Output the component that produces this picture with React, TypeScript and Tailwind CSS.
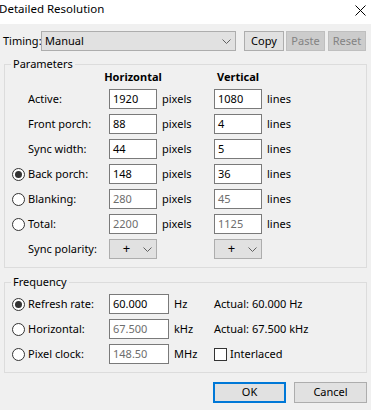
import React from 'react';

const FONT = { fontFamily: '"Segoe UI", "Noto Sans", sans-serif' };

const Chevron = () => (
  <svg width="9" height="5" viewBox="0 0 9 5" fill="none">
    <polyline points="0.5,0.5 4.5,4.5 8.5,0.5" stroke="#606060" strokeWidth="1" />
  </svg>
);

const Radio = ({ checked = false }: { checked?: boolean }) => (
  <span className="flex h-[13px] w-[13px] shrink-0 items-center justify-center rounded-full border border-[#333] bg-white">
    {checked && <span className="h-[7px] w-[7px] rounded-full bg-[#333]" />}
  </span>
);

const Field = ({ value, w = 'w-[48px]', disabled = false }: { value: string; w?: string; disabled?: boolean }) => (
  <div
    className={`flex h-[20px] shrink-0 items-center border border-[#7a7a7a] bg-white pl-[3px] ${w} ${
      disabled ? 'text-[#6d6d6d]' : 'text-black'
    }`}
  >
    {value}
  </div>
);

type Row = {
  label: string;
  radio?: boolean;
  checked?: boolean;
  h: string;
  v: string;
  disabled?: boolean;
};

const rows: Row[] = [
  { label: 'Active:', h: '1920', v: '1080' },
  { label: 'Front porch:', h: '88', v: '4' },
  { label: 'Sync width:', h: '44', v: '5' },
  { label: 'Back porch:', radio: true, checked: true, h: '148', v: '36' },
  { label: 'Blanking:', radio: true, h: '280', v: '45', disabled: true },
  { label: 'Total:', radio: true, h: '2200', v: '1125', disabled: true },
];

const Label = ({ text, radio, checked }: { text: string; radio?: boolean; checked?: boolean }) => (
  <div className="flex w-[97px] shrink-0 items-center">
    {radio ? (
      <>
        <Radio checked={checked} />
        <span className="ml-[3px]">{text}</span>
      </>
    ) : (
      <span className="pl-[16px]">{text}</span>
    )}
  </div>
);

const PolarityBox = () => (
  <div className="flex h-[20px] w-[48px] shrink-0 items-center border border-[#adadad] bg-[#e1e1e1]">
    <span className="w-[33px] text-center text-[13px]">+</span>
    <Chevron />
  </div>
);

export default function App() {
  return (
    <div className="h-[410px] w-[371px] overflow-hidden bg-[#f0f0f0] text-[11px] text-black" style={FONT}>
      {/* title bar */}
      <div className="flex h-[24px] items-start justify-between bg-white">
        <span className="ml-[-1px] text-[11.5px] leading-[18px]">Detailed Resolution</span>
        <svg className="mr-[5px] mt-[5px]" width="11" height="11" viewBox="0 0 11 11">
          <path d="M0.5 0.5 L10.5 10.5 M10.5 0.5 L0.5 10.5" stroke="#000" strokeWidth="1" />
        </svg>
      </div>

      {/* timing row */}
      <div className="mt-[7px] flex h-[20px] items-center">
        <span className="ml-[3px] w-[38px] shrink-0">Timing:</span>
        <div className="flex h-[20px] w-[195px] items-center justify-between border border-[#adadad] bg-[#e1e1e1] pl-[3px] pr-[4px]">
          <span>Manual</span>
          <Chevron />
        </div>
        <button className="ml-[8px] h-[20px] w-[40px] border border-[#adadad] bg-[#e1e1e1]">Copy</button>
        <button className="ml-[2px] h-[20px] w-[39px] border border-[#bfbfbf] bg-[#cccccc] text-[#838383]">
          Paste
        </button>
        <button className="ml-[3px] h-[20px] w-[38px] border border-[#bfbfbf] bg-[#cccccc] text-[#838383]">
          Reset
        </button>
      </div>

      {/* parameters */}
      <fieldset className="mx-[4px] mt-[7px] border border-[#dcdcdc] pb-[8px] pl-[7px]">
        <legend className="ml-[-1px] px-[2px] leading-[12px]">Parameters</legend>
        <div className="flex h-[14px] items-center font-bold">
          <div className="w-[97px]" />
          <div className="flex w-[48px] justify-center whitespace-nowrap">Horizontal</div>
          <div className="w-[57px]" />
          <div className="flex w-[48px] justify-center whitespace-nowrap">Vertical</div>
        </div>
        <div className="mt-[5px] flex flex-col gap-[5px]">
          {rows.map((r) => (
            <div key={r.label} className="flex h-[20px] items-center">
              <Label text={r.label} radio={r.radio} checked={r.checked} />
              <Field value={r.h} disabled={r.disabled} />
              <span className="w-[57px] shrink-0 pl-[5px]">pixels</span>
              <Field value={r.v} disabled={r.disabled} />
              <span className="pl-[5px]">lines</span>
            </div>
          ))}
          <div className="flex h-[20px] items-center">
            <Label text="Sync polarity:" />
            <PolarityBox />
            <span className="w-[57px] shrink-0" />
            <PolarityBox />
          </div>
        </div>
      </fieldset>

      {/* frequency */}
      <fieldset className="mx-[4px] mt-[8px] border border-[#dcdcdc] pb-[8px] pl-[7px]">
        <legend className="ml-[-1px] px-[2px] leading-[12px]">Frequency</legend>
        <div className="mt-[6px] flex flex-col gap-[5px]">
          <div className="flex h-[20px] items-center">
            <Label text="Refresh rate:" radio checked />
            <Field value="60.000" w="w-[60px]" />
            <span className="w-[45px] shrink-0 pl-[5px]">Hz</span>
            <span>Actual: 60.000 Hz</span>
          </div>
          <div className="flex h-[20px] items-center">
            <Label text="Horizontal:" radio />
            <Field value="67.500" w="w-[60px]" disabled />
            <span className="w-[45px] shrink-0 pl-[5px]">kHz</span>
            <span>Actual: 67.500 kHz</span>
          </div>
          <div className="flex h-[20px] items-center">
            <Label text="Pixel clock:" radio />
            <Field value="148.50" w="w-[60px]" disabled />
            <span className="w-[45px] shrink-0 pl-[5px]">MHz</span>
            <span className="h-[13px] w-[13px] shrink-0 border border-[#333] bg-white" />
            <span className="ml-[3px]">Interlaced</span>
          </div>
        </div>
      </fieldset>

      {/* buttons */}
      <div className="mt-[9px] flex h-[21px] justify-end gap-[8px] pr-[4px]">
        <button className="w-[73px] border-2 border-[#0078d7] bg-[#e1e1e1]">OK</button>
        <button className="w-[73px] border border-[#adadad] bg-[#e1e1e1]">Cancel</button>
      </div>
    </div>
  );
}
